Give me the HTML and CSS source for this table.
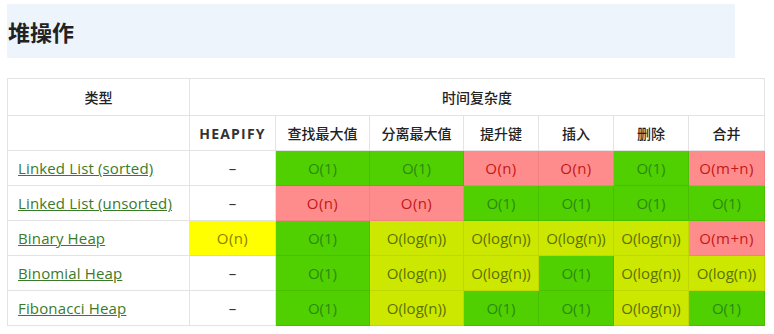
FILE: index.html
```html
<!DOCTYPE html>
<html>
<head>
    <meta charset="utf-8">
    <title>堆操作</title>
    <link rel="stylesheet" href="styles.css">
</head>
<body>
<h2 class="title">堆操作</h2>
<table class="ops">
    <colgroup>
        <col class="c-type">
        <col class="c-heapify">
        <col class="c-wide">
        <col class="c-wide">
        <col class="c-narrow">
        <col class="c-narrow">
        <col class="c-narrow">
        <col class="c-last">
    </colgroup>
    <thead>
    <tr class="head-top">
        <th>类型</th>
        <th colspan="7">时间复杂度</th>
    </tr>
    <tr>
        <th></th>
        <th class="latin">HEAPIFY</th>
        <th>查找最大值</th>
        <th>分离最大值</th>
        <th>提升键</th>
        <th>插入</th>
        <th>删除</th>
        <th>合并</th>
    </tr>
    </thead>
    <tbody>
    <tr>
        <td class="name"><a href="#">Linked List (sorted)</a></td>
        <td>–</td>
        <td class="good">O(1)</td>
        <td class="good">O(1)</td>
        <td class="bad">O(n)</td>
        <td class="bad">O(n)</td>
        <td class="good">O(1)</td>
        <td class="bad">O(m+n)</td>
    </tr>
    <tr>
        <td class="name"><a href="#">Linked List (unsorted)</a></td>
        <td>–</td>
        <td class="bad">O(n)</td>
        <td class="bad">O(n)</td>
        <td class="good">O(1)</td>
        <td class="good">O(1)</td>
        <td class="good">O(1)</td>
        <td class="good">O(1)</td>
    </tr>
    <tr>
        <td class="name"><a href="#">Binary Heap</a></td>
        <td class="fair">O(n)</td>
        <td class="good">O(1)</td>
        <td class="ok">O(log(n))</td>
        <td class="ok">O(log(n))</td>
        <td class="ok">O(log(n))</td>
        <td class="ok">O(log(n))</td>
        <td class="bad">O(m+n)</td>
    </tr>
    <tr>
        <td class="name"><a href="#">Binomial Heap</a></td>
        <td>–</td>
        <td class="good">O(1)</td>
        <td class="ok">O(log(n))</td>
        <td class="ok">O(log(n))</td>
        <td class="good">O(1)</td>
        <td class="ok">O(log(n))</td>
        <td class="ok">O(log(n))</td>
    </tr>
    <tr>
        <td class="name"><a href="#">Fibonacci Heap</a></td>
        <td>–</td>
        <td class="good">O(1)</td>
        <td class="ok">O(log(n))</td>
        <td class="good">O(1)</td>
        <td class="good">O(1)</td>
        <td class="ok">O(log(n))</td>
        <td class="good">O(1)</td>
    </tr>
    </tbody>
</table>
</body>
</html>
```

FILE: styles.css
```css
body {
    margin: 0;
    padding: 4px 7px;
    font-family: "Open Sans", "Noto Sans CJK SC", sans-serif;
    font-size: 15px;
    color: #222;
    background-color: #fff;
}

.title {
    width: 728px;
    height: 54px;
    margin: 0;
    padding: 0 1px;
    box-sizing: border-box;
    display: flex;
    align-items: center;
    background-color: #eef4fb;
    font-family: "Noto Sans CJK SC", sans-serif;
    font-size: 22px;
    font-weight: 700;
    color: #222;
}

.ops {
    margin-top: 20px;
    width: 758px;
    border-collapse: collapse;
    table-layout: fixed;
}

.c-type { width: 182px; }
.c-heapify { width: 86px; }
.c-wide { width: 94px; }
.c-narrow { width: 75px; }
.c-last { width: 76px; }

.ops th, .ops td {
    border: 1px solid #e3e3e3;
    padding: 0;
    height: 34px;
    text-align: center;
    white-space: nowrap;
    overflow: hidden;
}

.ops th {
    font-family: "Noto Sans CJK SC", sans-serif;
    font-size: 14px;
    font-weight: 500;
    color: #222;
}

.ops .head-top th {
    height: 36px;
}

.ops th.latin {
    font-family: "Open Sans", sans-serif;
    font-weight: 700;
    letter-spacing: 1.2px;
    color: #333;
}

.ops td {
    color: #333;
}

.ops td.name {
    text-align: left;
    padding-left: 10px;
}

.ops td.name a {
    color: #3b7a2a;
    text-decoration: underline;
    letter-spacing: 0.15px;
}

.ops td.good {
    background-color: #50d000;
    border-color: #48c000;
    color: #2a8a10;
}

.ops td.bad {
    background-color: #ff8c8c;
    border-color: #f08282;
    color: #c21818;
}

.ops td.bad, .ops td.fair {
    letter-spacing: 0.4px;
}

.ops td.ok {
    background-color: #cde800;
    border-color: #c0d800;
    color: #5a7200;
}

.ops td.fair {
    background-color: #ffff00;
    border-color: #eeee00;
    color: #8c8000;
}
```
